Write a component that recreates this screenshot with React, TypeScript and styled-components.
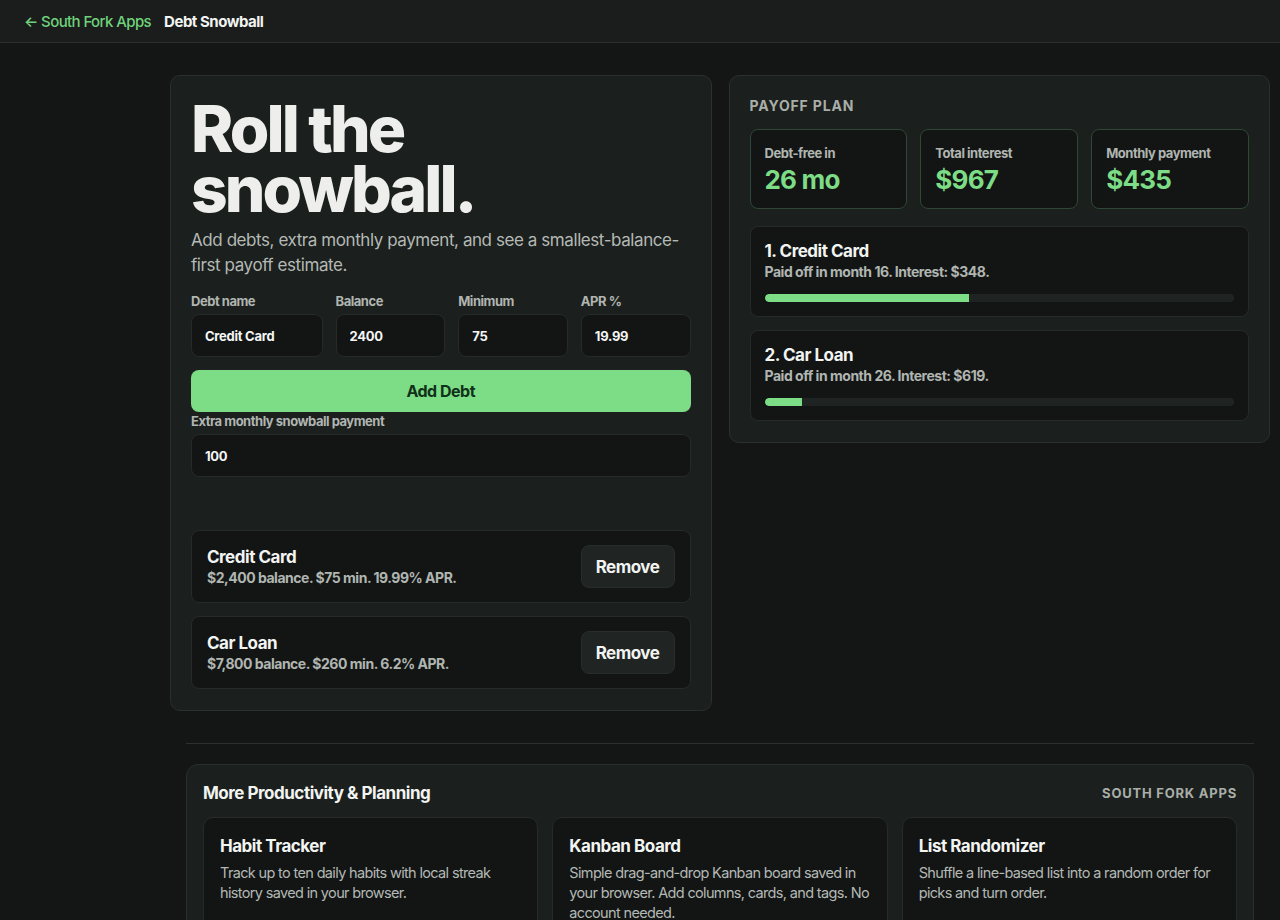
import { createGlobalStyle, styled } from 'styled-components';

const GlobalStyle = createGlobalStyle`
  * {
    box-sizing: border-box;
  }

  body {
    margin: 0;
    background: #131614;
    color: #ecefec;
    font-family: Inter, 'Noto Sans', sans-serif;
    letter-spacing: -0.03em;
  }

  p,
  h1,
  h2,
  h3 {
    margin: 0;
  }
`;

interface Debt {
  name: string;
  balance: number;
  min: number;
  apr: string;
  month: number;
  interest: number;
  progress: number;
}

const debts: Debt[] = [
  { name: 'Credit Card', balance: 2400, min: 75, apr: '19.99', month: 16, interest: 348, progress: 43.5 },
  { name: 'Car Loan', balance: 7800, min: 260, apr: '6.2', month: 26, interest: 619, progress: 8 },
];

const stats = [
  { label: 'Debt-free in', value: '26 mo' },
  { label: 'Total interest', value: '$967' },
  { label: 'Monthly payment', value: '$435' },
];

const related = [
  {
    title: 'Habit Tracker',
    text: 'Track up to ten daily habits with local streak history saved in your browser.',
  },
  {
    title: 'Kanban Board',
    text: 'Simple drag-and-drop Kanban board saved in your browser. Add columns, cards, and tags. No account needed.',
  },
  {
    title: 'List Randomizer',
    text: 'Shuffle a line-based list into a random order for picks and turn order.',
  },
];

const money = (n: number) => '$' + n.toLocaleString('en-US');

const App = () => (
  <>
    <GlobalStyle />
    <TopBar>
      <BackLink>← South Fork Apps</BackLink>
      <PageName>Debt Snowball</PageName>
    </TopBar>

    <Main>
      <Columns>
        <Panel>
          <Hero>Roll the snowball.</Hero>
          <Lead>Add debts, extra monthly payment, and see a smallest-balance-first payoff estimate.</Lead>

          <FieldGrid>
            <Field>
              <Label>Debt name</Label>
              <Input defaultValue="Credit Card" />
            </Field>
            <Field>
              <Label>Balance</Label>
              <Input defaultValue="2400" />
            </Field>
            <Field>
              <Label>Minimum</Label>
              <Input defaultValue="75" />
            </Field>
            <Field>
              <Label>APR %</Label>
              <Input defaultValue="19.99" />
            </Field>
          </FieldGrid>

          <AddButton>Add Debt</AddButton>

          <ExtraField>
            <Label>Extra monthly snowball payment</Label>
            <Input defaultValue="100" />
          </ExtraField>

          <DebtList>
            {debts.map((d) => (
              <DebtRow key={d.name}>
                <div>
                  <ItemTitle>{d.name}</ItemTitle>
                  <ItemMeta>
                    {money(d.balance)} balance. {money(d.min)} min. {d.apr}% APR.
                  </ItemMeta>
                </div>
                <RemoveButton>Remove</RemoveButton>
              </DebtRow>
            ))}
          </DebtList>
        </Panel>

        <Panel>
          <Eyebrow>Payoff plan</Eyebrow>
          <StatGrid>
            {stats.map((s) => (
              <Stat key={s.label}>
                <StatLabel>{s.label}</StatLabel>
                <StatValue>{s.value}</StatValue>
              </Stat>
            ))}
          </StatGrid>
          <PlanList>
            {debts.map((d, i) => (
              <PlanItem key={d.name}>
                <ItemTitle>
                  {i + 1}. {d.name}
                </ItemTitle>
                <ItemMeta>
                  Paid off in month {d.month}. Interest: {money(d.interest)}.
                </ItemMeta>
                <Track>
                  <Fill style={{ width: `${d.progress}%` }} />
                </Track>
              </PlanItem>
            ))}
          </PlanList>
        </Panel>
      </Columns>

      <More>
        <Divider />
        <MoreCard>
          <MoreHead>
            <MoreTitle>More Productivity &amp; Planning</MoreTitle>
            <Brand>South Fork Apps</Brand>
          </MoreHead>
          <AppGrid>
            {related.map((r) => (
              <AppCard key={r.title}>
                <AppTitle>{r.title}</AppTitle>
                <AppText>{r.text}</AppText>
              </AppCard>
            ))}
          </AppGrid>
        </MoreCard>
      </More>
    </Main>
  </>
);

export default App;

const TopBar = styled.header`
  display: flex;
  align-items: center;
  gap: 13px;

  height: 43px;
  padding: 0 24px;

  background: #1a1d1b;
  border-bottom: 1px solid #2a302c;
`;

const BackLink = styled.a`
  color: #6fd27b;
  font-size: 15px;
  font-weight: 500;
  letter-spacing: -0.04em;
  text-decoration: none;
`;

const PageName = styled.span`
  color: #f2f4f2;
  font-size: 15px;
  font-weight: 700;
`;

const Main = styled.main`
  width: 1100px;
  margin-left: 170px;
  padding-top: 32px;
`;

const Columns = styled.div`
  display: grid;
  grid-template-columns: 1fr 1fr;
  align-items: start;
  gap: 17px;
`;

const Panel = styled.section`
  padding: 20px 20px 21px;

  background: #1b1f1d;
  border: 1px solid #2a302c;
  border-radius: 10px;
`;

const Hero = styled.h1`
  width: 320px;
  padding-top: 3px;

  color: #eeefed;
  font-size: 64px;
  font-weight: 800;
  line-height: 60px;
  letter-spacing: -0.045em;
`;

const Lead = styled.p`
  margin-top: 9px;

  color: #b4b9b5;
  font-size: 17px;
  line-height: 25px;
  letter-spacing: -0.025em;
`;

const FieldGrid = styled.div`
  display: grid;
  grid-template-columns: 1.2fr 1fr 1fr 1fr;
  gap: 13px;

  margin-top: 15px;
`;

const Field = styled.label`
  display: flex;
  flex-direction: column;
  gap: 5px;
`;

const Label = styled.span`
  color: #b0b5b1;
  font-size: 13px;
  font-weight: 700;
`;

const Input = styled.input`
  width: 100%;
  height: 43px;
  padding: 0 13px;

  color: #f4f5f4;
  font-family: inherit;
  font-size: 13px;
  font-weight: 700;
  letter-spacing: -0.02em;

  background: #121514;
  border: 1px solid #262b28;
  border-radius: 8px;
  outline: none;
`;

const AddButton = styled.button`
  width: 100%;
  height: 42px;
  margin-top: 13px;

  color: #10301a;
  font-family: inherit;
  font-size: 16px;
  font-weight: 700;
  letter-spacing: -0.03em;

  background: #7ddc86;
  border: none;
  border-radius: 8px;
`;

const ExtraField = styled(Field)`
  margin-top: 1px;
`;

const DebtList = styled.div`
  display: flex;
  flex-direction: column;
  gap: 13px;

  margin-top: 53px;
`;

const DebtRow = styled.div`
  display: flex;
  align-items: center;
  justify-content: space-between;

  height: 73px;
  padding: 0 15px;

  background: #121514;
  border: 1px solid #262b28;
  border-radius: 8px;
`;

const ItemTitle = styled.h3`
  color: #f2f4f2;
  font-size: 17px;
  font-weight: 700;
  line-height: 22px;
`;

const ItemMeta = styled.p`
  color: #b0b5b1;
  font-size: 14px;
  font-weight: 700;
  line-height: 20px;
`;

const RemoveButton = styled.button`
  width: 94px;
  height: 43px;

  color: #f2f4f2;
  font-family: inherit;
  font-size: 17px;
  font-weight: 700;
  letter-spacing: -0.03em;

  background: #202523;
  border: 1px solid #272d2a;
  border-radius: 8px;
`;

const Eyebrow = styled.h2`
  margin-top: 1px;

  color: #a9aea9;
  font-size: 14px;
  font-weight: 700;
  letter-spacing: 0.06em;
  text-transform: uppercase;
`;

const StatGrid = styled.div`
  display: grid;
  grid-template-columns: repeat(3, 1fr);
  gap: 13px;

  margin-top: 15px;
`;

const Stat = styled.div`
  height: 80px;
  padding: 15px 14px;

  background: #121514;
  border: 1px solid #2f4734;
  border-radius: 8px;
`;

const StatLabel = styled.p`
  color: #b0b5b1;
  font-size: 13px;
  font-weight: 700;
`;

const StatValue = styled.p`
  margin-top: 3px;

  color: #7ddc86;
  font-size: 26px;
  font-weight: 700;
  letter-spacing: -0.03em;
`;

const PlanList = styled.div`
  display: flex;
  flex-direction: column;
  gap: 13px;

  margin-top: 17px;
`;

const PlanItem = styled.div`
  height: 91px;
  padding: 13px 14px 0;

  background: #121514;
  border: 1px solid #262b28;
  border-radius: 8px;
`;

const Track = styled.div`
  height: 8px;
  margin-top: 12px;

  background: #1f2422;
  border-radius: 4px;
  overflow: hidden;
`;

const Fill = styled.div`
  height: 100%;

  background: #7ddc86;
  border-radius: 4px 0 0 4px;
`;

const More = styled.div`
  margin: 32px 16px 0;
`;

const Divider = styled.hr`
  margin: 0;

  border: none;
  border-top: 1px solid #2a302c;
`;

const MoreCard = styled.section`
  margin-top: 20px;
  padding: 18px 16px 40px;

  background: #1b1f1d;
  border: 1px solid #2a302c;
  border-radius: 12px;
`;

const MoreHead = styled.div`
  display: flex;
  align-items: center;
  justify-content: space-between;
`;

const MoreTitle = styled.h2`
  color: #f2f4f2;
  font-size: 17px;
  font-weight: 700;
`;

const Brand = styled.span`
  color: #a9aea9;
  font-size: 13px;
  font-weight: 700;
  letter-spacing: 0.06em;
  text-transform: uppercase;
`;

const AppGrid = styled.div`
  display: grid;
  grid-template-columns: repeat(3, 1fr);
  gap: 14px;

  margin-top: 14px;
`;

const AppCard = styled.div`
  min-height: 120px;
  padding: 18px 16px 16px;

  background: #121514;
  border: 1px solid #262b28;
  border-radius: 10px;
`;

const AppTitle = styled.h3`
  color: #f2f4f2;
  font-size: 17px;
  font-weight: 700;
`;

const AppText = styled.p`
  margin-top: 7px;

  color: #b4b9b5;
  font-size: 14.5px;
  line-height: 20px;
  letter-spacing: -0.045em;
`;
